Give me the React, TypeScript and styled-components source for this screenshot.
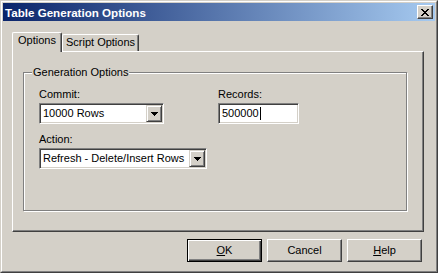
import React from 'react'
import styled, { createGlobalStyle } from 'styled-components'

const face = '#d4d0c8'
const light = '#ffffff'
const shadow = '#808080'
const dark = '#404040'

const GlobalStyle = createGlobalStyle`
  html, body {
    margin: 0;
    padding: 0;
    background: ${face};
  }

  body {
    font-family: 'Liberation Sans', Arial, sans-serif;
    font-size: 11px;
    line-height: 13px;
    color: #000;
  }
`

const Window = styled.div`
  box-sizing: border-box;
  width: 438px;
  height: 273px;
  border: 1px solid;
  border-color: ${face} ${dark} ${dark} ${face};
  background: ${face};
`

const Frame = styled.div`
  box-sizing: border-box;
  height: 100%;
  display: flex;
  flex-direction: column;
  padding: 1px;
  border: 1px solid;
  border-color: ${light} ${shadow} ${shadow} ${light};
`

const TitleBar = styled.div`
  display: flex;
  align-items: center;
  justify-content: space-between;
  height: 18px;
  padding: 0 2px;
  background: linear-gradient(to right, #0a246a, #a6caf0);
`

const Title = styled.span`
  color: #fff;
  font-weight: bold;
  font-size: 11.6px;
  padding-left: 0;
`

const CloseButton = styled.div`
  box-sizing: border-box;
  display: flex;
  align-items: center;
  justify-content: center;
  width: 16px;
  height: 14px;
  border: 1px solid;
  border-color: ${light} ${dark} ${dark} ${light};
  box-shadow: inset -1px -1px 0 ${shadow};
  background: ${face};
`

const Body = styled.div`
  flex: 1;
  display: flex;
  flex-direction: column;
  padding: 10px 11px 0 9px;
`

const TabRow = styled.div`
  display: flex;
  align-items: flex-end;
  height: 20px;
`

const Tab = styled.div<{ $active?: boolean; $width: number }>`
  box-sizing: border-box;
  position: relative;
  z-index: ${(p) => (p.$active ? 1 : 0)};
  width: ${(p) => p.$width}px;
  height: ${(p) => (p.$active ? 20 : 17)}px;
  margin-bottom: ${(p) => (p.$active ? -1 : 0)}px;
  padding-top: 1px;
  text-align: center;
  background: ${face};
  border-top: 1px solid ${light};
  border-left: 1px solid ${light};
  border-right: 1px solid ${dark};
  border-top-left-radius: 2px;
  border-top-right-radius: 2px;
  box-shadow: inset -1px 0 0 ${shadow};
`

const Panel = styled.div`
  box-sizing: border-box;
  width: 412px;
  height: 181px;
  padding: 20px 0 0 10px;
  border: 1px solid;
  border-color: ${light} ${dark} ${dark} ${light};
  box-shadow: inset -1px -1px 0 ${shadow};
`

const Group = styled.div`
  box-sizing: border-box;
  position: relative;
  width: 384px;
  height: 139px;
  padding: 15px 0 0 15px;
  border: 1px solid ${shadow};
  box-shadow: 1px 1px 0 ${light}, inset 1px 1px 0 ${light};
`

const GroupCaption = styled.span`
  position: absolute;
  top: -7px;
  left: 8px;
  padding: 0 1px;
  background: ${face};
`

const FieldGrid = styled.div`
  display: grid;
  grid-template-columns: 179px auto;
  row-gap: 9px;
  align-items: start;
`

const Field = styled.div`
  display: flex;
  flex-direction: column;
  align-items: flex-start;
  gap: 2px;
`

const Label = styled.label`
  display: block;
  height: 13px;
`

const Sunken = styled.div<{ $width: number }>`
  box-sizing: border-box;
  display: flex;
  align-items: stretch;
  width: ${(p) => p.$width}px;
  height: 21px;
  border: 1px solid;
  border-color: ${shadow} ${light} ${light} ${shadow};
  box-shadow: inset 1px 1px 0 ${dark}, inset -1px -1px 0 ${face};
  padding: 2px;
  background: #fff;
  background-clip: padding-box;
`

const FieldText = styled.span`
  flex: 1;
  display: flex;
  align-items: center;
  padding-left: 1px;
  white-space: nowrap;
`

const Caret = styled.span`
  display: inline-block;
  width: 1px;
  height: 13px;
  margin-left: 1px;
  background: #000;
`

const DropButton = styled.div`
  box-sizing: border-box;
  display: flex;
  align-items: center;
  justify-content: center;
  width: 16px;
  margin: -1px -1px -1px 0;
  border: 1px solid;
  border-color: ${face} ${dark} ${dark} ${face};
  box-shadow: inset 1px 1px 0 ${light}, inset -1px -1px 0 ${shadow};
  background: ${face};
`

const ButtonRow = styled.div`
  display: flex;
  justify-content: flex-end;
  gap: 5px;
  margin-top: 7px;
  padding-right: 2px;
`

const Button = styled.div<{ $default?: boolean }>`
  box-sizing: border-box;
  display: flex;
  align-items: center;
  justify-content: center;
  width: 75px;
  height: 23px;
  background: ${face};
  border: 1px solid;
  border-color: ${(p) => (p.$default ? '#000' : `${light} ${dark} ${dark} ${light}`)};
  box-shadow: ${(p) =>
    p.$default
      ? `inset 1px 1px 0 ${light}, inset -1px -1px 0 ${dark}, inset -2px -2px 0 ${shadow}`
      : `inset -1px -1px 0 ${shadow}`};
`

const Mnemonic = styled.span`
  text-decoration: underline;
  text-underline-offset: 1px;
`

const CloseGlyph = () => (
  <svg width="8" height="7" viewBox="0 0 8 7" shapeRendering="crispEdges">
    <path
      fill="#000"
      d="M0 0h2v1H0zM6 0h2v1H6zM1 1h2v1H1zM5 1h2v1H5zM2 2h4v1H2zM3 3h2v1H3zM2 4h4v1H2zM1 5h2v1H1zM5 5h2v1H5zM0 6h2v1H0zM6 6h2v1H6z"
    />
  </svg>
)

const ArrowGlyph = () => (
  <svg width="7" height="4" viewBox="0 0 7 4" shapeRendering="crispEdges">
    <path fill="#000" d="M0 0h7v1H0zM1 1h5v1H1zM2 2h3v1H2zM3 3h1v1H3z" />
  </svg>
)

const Combo = ({ value, width }: { value: string; width: number }) => (
  <Sunken $width={width}>
    <FieldText>{value}</FieldText>
    <DropButton>
      <ArrowGlyph />
    </DropButton>
  </Sunken>
)

export default function App() {
  return (
    <>
      <GlobalStyle />
      <Window>
        <Frame>
          <TitleBar>
            <Title>Table Generation Options</Title>
            <CloseButton>
              <CloseGlyph />
            </CloseButton>
          </TitleBar>
          <Body>
            <TabRow>
              <Tab $active $width={50}>
                Options
              </Tab>
              <Tab $width={77}>Script Options</Tab>
            </TabRow>
            <Panel>
              <Group>
                <GroupCaption>Generation Options</GroupCaption>
                <FieldGrid>
                  <Field>
                    <Label>Commit:</Label>
                    <Combo value="10000 Rows" width={125} />
                  </Field>
                  <Field>
                    <Label>Records:</Label>
                    <Sunken $width={81}>
                      <FieldText>
                        500000
                        <Caret />
                      </FieldText>
                    </Sunken>
                  </Field>
                  <Field>
                    <Label>Action:</Label>
                    <Combo value="Refresh - Delete/Insert Rows" width={168} />
                  </Field>
                </FieldGrid>
              </Group>
            </Panel>
            <ButtonRow>
              <Button $default>
                <span>
                  <Mnemonic>O</Mnemonic>K
                </span>
              </Button>
              <Button>Cancel</Button>
              <Button>
                <span>
                  <Mnemonic>H</Mnemonic>elp
                </span>
              </Button>
            </ButtonRow>
          </Body>
        </Frame>
      </Window>
    </>
  )
}
